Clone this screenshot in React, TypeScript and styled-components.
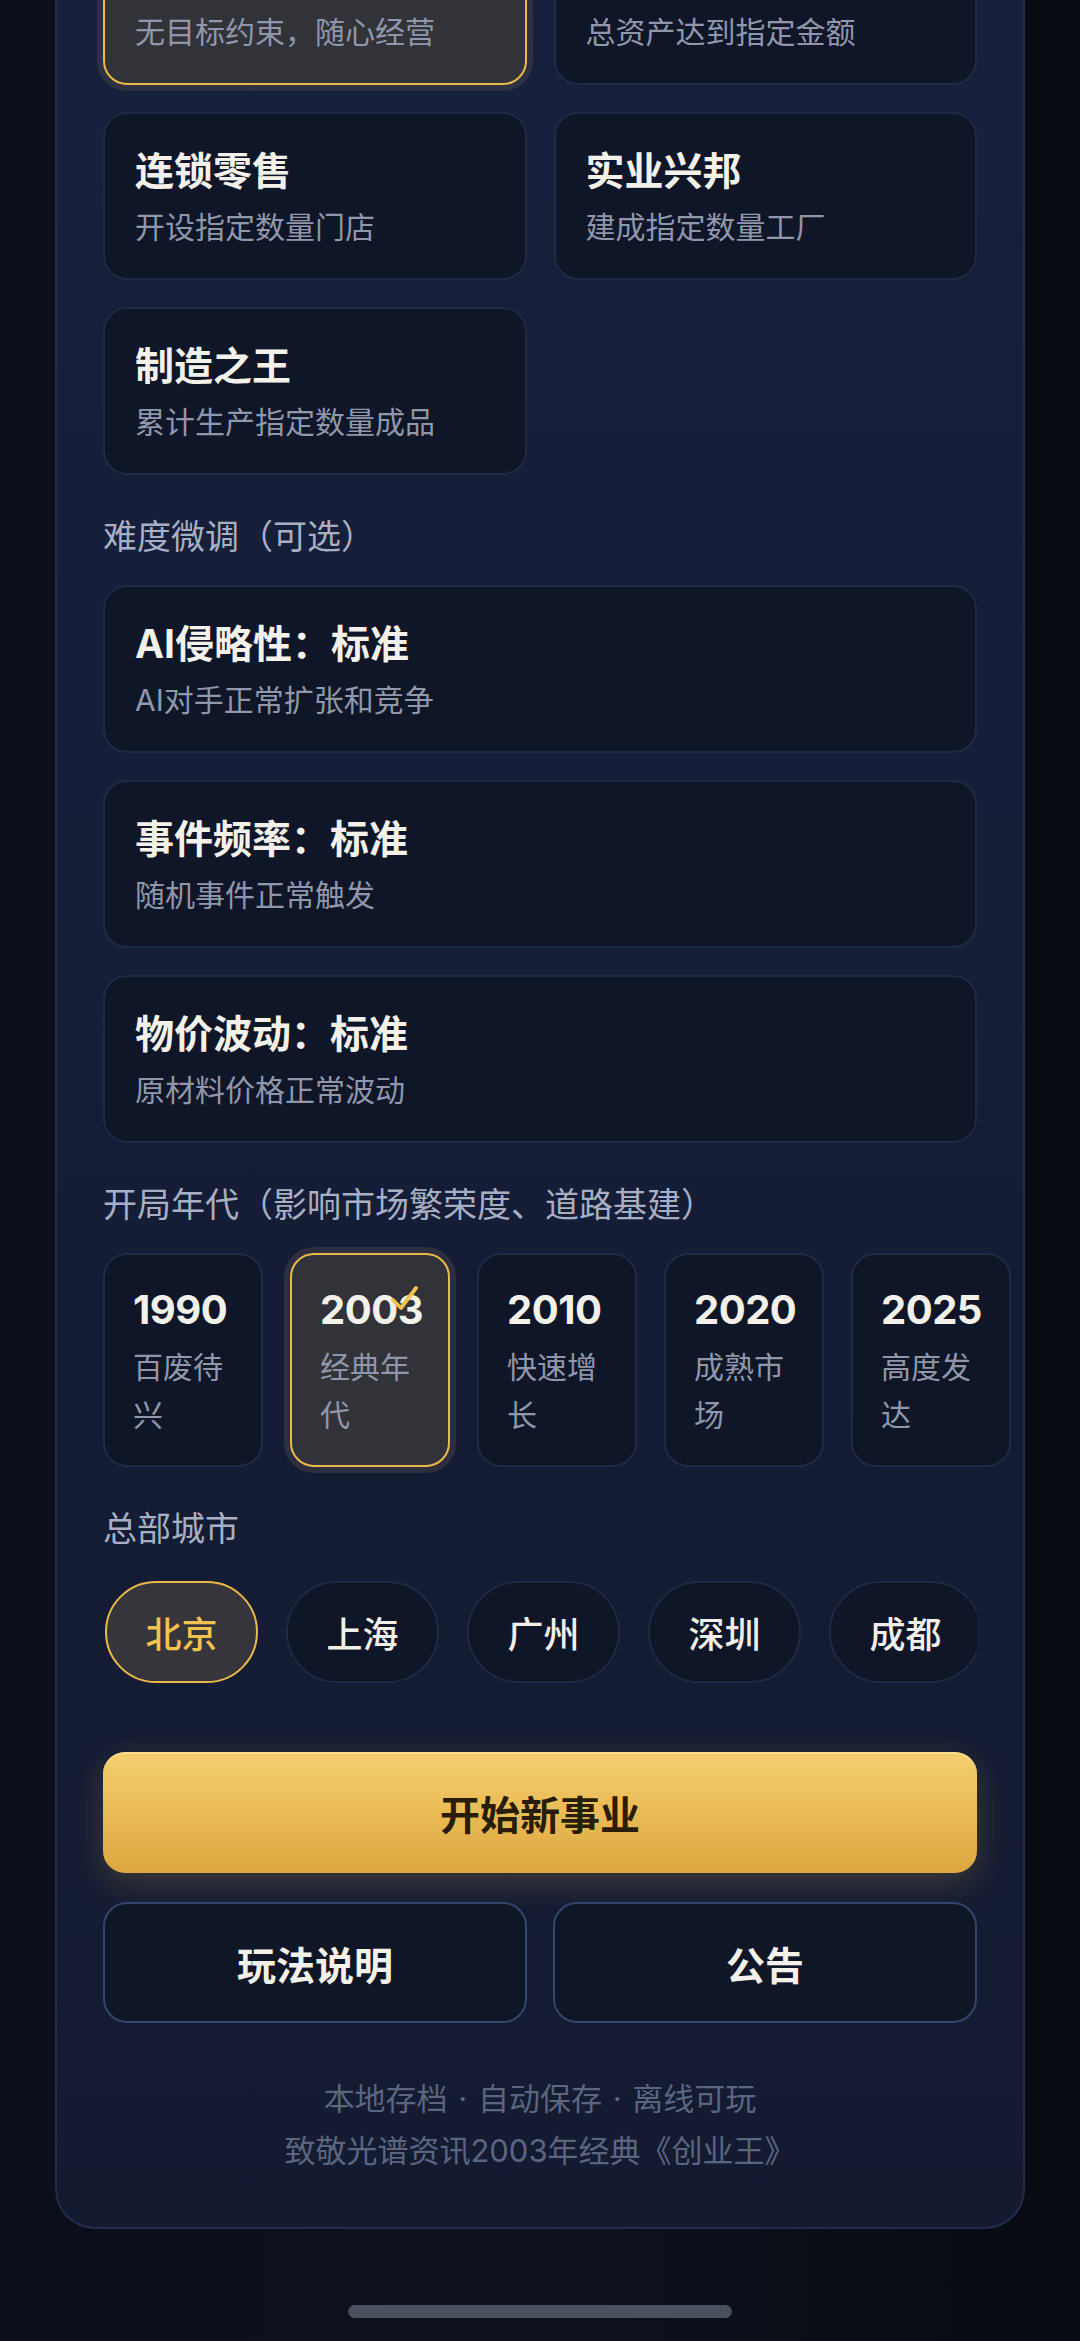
import React, { FC } from "react";
import styled, { createGlobalStyle, css } from "styled-components";

const GlobalStyle = createGlobalStyle`
  html, body {
    margin: 0;
    padding: 0;
    background: #0a0e17;
  }
  body {
    font-family: Inter, "Noto Sans CJK SC", "Noto Sans", sans-serif;
    color: #f2f0ea;
    -webkit-font-smoothing: antialiased;
  }
  * {
    box-sizing: border-box;
  }
`;

type Option = {
  title: string;
  desc: string;
  selected?: boolean;
};

const GOALS: Option[] = [
  { title: "自由经营", desc: "无目标约束，随心经营", selected: true },
  { title: "资产大亨", desc: "总资产达到指定金额" },
  { title: "连锁零售", desc: "开设指定数量门店" },
  { title: "实业兴邦", desc: "建成指定数量工厂" },
  { title: "制造之王", desc: "累计生产指定数量成品" },
];

const TWEAKS: Option[] = [
  { title: "AI侵略性：标准", desc: "AI对手正常扩张和竞争" },
  { title: "事件频率：标准", desc: "随机事件正常触发" },
  { title: "物价波动：标准", desc: "原材料价格正常波动" },
];

const ERAS: Option[] = [
  { title: "1990", desc: "百废待兴" },
  { title: "2003", desc: "经典年代", selected: true },
  { title: "2010", desc: "快速增长" },
  { title: "2020", desc: "成熟市场" },
  { title: "2025", desc: "高度发达" },
];

const CITIES = ["北京", "上海", "广州", "深圳", "成都"];

const Check: FC = () => (
  <StyledCheck viewBox="0 0 28 28" fill="none">
    <polyline
      points="3,15 11,23 26,3"
      stroke="#f2c14e"
      strokeWidth="3.8"
      strokeLinecap="round"
      strokeLinejoin="round"
    />
  </StyledCheck>
);

const App: FC = () => {
  return (
    <>
      <GlobalStyle />
      <StyledPage>
        <StyledPanel>
          <StyledGoalGrid>
            {GOALS.map((goal) => (
              <StyledOptionCard key={goal.title} $selected={goal.selected}>
                <StyledOptionTitle>{goal.title}</StyledOptionTitle>
                <StyledOptionDesc>{goal.desc}</StyledOptionDesc>
              </StyledOptionCard>
            ))}
          </StyledGoalGrid>

          <StyledSectionLabel>难度微调（可选）</StyledSectionLabel>
          <StyledTweakList>
            {TWEAKS.map((tweak) => (
              <StyledOptionCard key={tweak.title}>
                <StyledOptionTitle>{tweak.title}</StyledOptionTitle>
                <StyledOptionDesc>{tweak.desc}</StyledOptionDesc>
              </StyledOptionCard>
            ))}
          </StyledTweakList>

          <StyledSectionLabel>开局年代（影响市场繁荣度、道路基建）</StyledSectionLabel>
          <StyledEraRow>
            {ERAS.map((era) => (
              <StyledEraCard key={era.title} $selected={era.selected}>
                <StyledEraYear>{era.title}</StyledEraYear>
                <StyledEraDesc>{era.desc}</StyledEraDesc>
                {era.selected && <Check />}
              </StyledEraCard>
            ))}
          </StyledEraRow>

          <StyledSectionLabel>总部城市</StyledSectionLabel>
          <StyledCityRow>
            {CITIES.map((city, i) => (
              <StyledCityPill key={city} $selected={i === 0}>
                {city}
              </StyledCityPill>
            ))}
          </StyledCityRow>

          <StyledStartButton>开始新事业</StyledStartButton>
          <StyledButtonRow>
            <StyledGhostButton>玩法说明</StyledGhostButton>
            <StyledGhostButton>公告</StyledGhostButton>
          </StyledButtonRow>

          <StyledFooter>
            <StyledFooterLine $wide>本地存档 · 自动保存 · 离线可玩</StyledFooterLine>
            <StyledFooterLine>致敬光谱资讯2003年经典《创业王》</StyledFooterLine>
          </StyledFooter>
        </StyledPanel>
        <StyledHomeIndicator />
      </StyledPage>
    </>
  );
};

export default App;

const selectedCard = css`
  background: #323339;
  border-color: #e9b949;
  box-shadow: 0 0 0 6px rgba(70, 66, 72, 0.5);
`;

const StyledPage = styled.div`
  min-height: 2341px;
  padding: 0 55px 22px;
  display: flex;
  flex-direction: column;
  align-items: stretch;
  background: linear-gradient(90deg, #0b0f19 0%, #0d121d 50%, #080b12 100%);
  overflow: hidden;
`;

const StyledPanel = styled.section`
  margin-top: -125px;
  padding: 40px 46px 50px;
  display: flex;
  flex-direction: column;
  background: linear-gradient(180deg, #17213d 0%, #151d36 60%, #141b31 100%);
  border: 2px solid #222d4b;
  border-radius: 40px;
`;

const StyledGoalGrid = styled.div`
  display: grid;
  grid-template-columns: 1fr 1fr;
  gap: 27px;
`;

const StyledTweakList = styled.div`
  display: flex;
  flex-direction: column;
  gap: 27px;
`;

const StyledOptionCard = styled.div<{ $selected?: boolean }>`
  height: 168px;
  padding: 33px 30px 0;
  display: flex;
  flex-direction: column;
  background: #0f1627;
  border: 2px solid #1f2a45;
  border-radius: 24px;

  ${({ $selected }) => $selected && selectedCard}
`;

const StyledOptionTitle = styled.h3`
  margin: 0;
  font-size: 39px;
  line-height: 48px;
  font-weight: 700;
  color: #f3f1ea;
`;

const StyledOptionDesc = styled.p`
  margin: 12px 0 0;
  font-size: 30px;
  line-height: 40px;
  font-weight: 400;
  color: #9097ab;
`;

const StyledSectionLabel = styled.h4`
  margin: 40px 0 26px;
  font-size: 34px;
  line-height: 44px;
  font-weight: 400;
  color: #a8afc2;
`;

const StyledEraRow = styled.div`
  display: flex;
  gap: 27px;
`;

const StyledEraCard = styled.div<{ $selected?: boolean }>`
  position: relative;
  flex: 0 0 160px;
  min-width: 0;
  height: 214px;
  padding: 28px 28px 0;
  background: #0f1627;
  border: 2px solid #1f2a45;
  border-radius: 24px;

  ${({ $selected }) => $selected && selectedCard}
`;

const StyledEraYear = styled.div`
  font-size: 40px;
  line-height: 54px;
  font-weight: 700;
  letter-spacing: -0.5px;
  white-space: nowrap;
  color: #f3f1ea;
`;

const StyledEraDesc = styled.div`
  margin-top: 6px;
  font-size: 30px;
  line-height: 48px;
  color: #9097ab;
`;

const StyledCheck = styled.svg`
  position: absolute;
  top: 30px;
  right: 30px;
  width: 28px;
  height: 28px;
`;

const StyledCityRow = styled.div`
  display: flex;
  gap: 28px;
  padding: 4px 2px;
  overflow: hidden;
`;

const StyledCityPill = styled.div<{ $selected?: boolean }>`
  flex: 0 0 153px;
  height: 102px;
  display: flex;
  align-items: center;
  justify-content: center;
  font-size: 36px;
  font-weight: 500;
  color: ${({ $selected }) => ($selected ? "#f2c14e" : "#f1efe9")};
  background: ${({ $selected }) => ($selected ? "#35353b" : "#0f1627")};
  border: 2px solid ${({ $selected }) => ($selected ? "#e9b949" : "#1f2a45")};
  border-radius: 51px;
`;

const StyledStartButton = styled.button`
  margin-top: 65px;
  height: 121px;
  font-family: inherit;
  font-size: 40px;
  font-weight: 700;
  color: #2a1d05;
  background: linear-gradient(180deg, #f5cf6f 0%, #e8b953 55%, #dca640 100%);
  border: none;
  border-radius: 22px;
  box-shadow: 0 10px 34px rgba(232, 182, 72, 0.2), inset 0 2px 0 rgba(255, 236, 170, 0.5);
`;

const StyledButtonRow = styled.div`
  margin-top: 29px;
  display: grid;
  grid-template-columns: 1fr 1fr;
  gap: 26px;
`;

const StyledGhostButton = styled.button`
  height: 121px;
  font-family: inherit;
  font-size: 39px;
  font-weight: 700;
  color: #f3f1ea;
  background: #0f1626;
  border: 2px solid #33456d;
  border-radius: 24px;
`;

const StyledFooter = styled.footer`
  margin-top: 50px;
  text-align: center;
`;

const StyledFooterLine = styled.p<{ $wide?: boolean }>`
  margin: 0;
  font-size: 31px;
  line-height: 52px;
  word-spacing: ${({ $wide }) => ($wide ? "2px" : "0")};
  color: #5b6580;
`;

const StyledHomeIndicator = styled.div`
  margin: 76px auto 0;
  width: 384px;
  height: 13px;
  border-radius: 7px;
  background: #4a505e;
`;
